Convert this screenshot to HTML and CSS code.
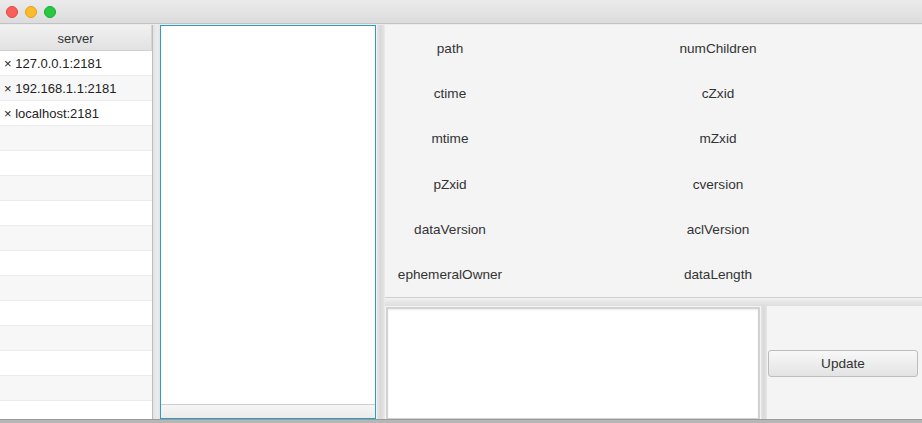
FILE: index.html
```html
<!DOCTYPE html>
<html>
<head>
<meta charset="utf-8">
<link rel="stylesheet" href="styles.css">
</head>
<body>
<div class="window">
  <div class="titlebar">
    <span class="light red"></span>
    <span class="light yellow"></span>
    <span class="light green"></span>
  </div>
  <div class="main">
    <div class="servers">
      <div class="th">server</div>
      <div class="row">× 127.0.0.1:2181</div>
      <div class="row alt">× 192.168.1.1:2181</div>
      <div class="row">× localhost:2181</div>
      <div class="row alt"></div>
      <div class="row"></div>
      <div class="row alt"></div>
      <div class="row"></div>
      <div class="row alt"></div>
      <div class="row"></div>
      <div class="row alt"></div>
      <div class="row"></div>
      <div class="row alt"></div>
      <div class="row"></div>
      <div class="row alt"></div>
      <div class="row"></div>
    </div>
    <div class="vdiv"></div>
    <div class="tree">
      <div class="tree-body"></div>
      <div class="hscroll"></div>
    </div>
    <div class="vdiv vdiv2"></div>
    <div class="detail">
      <div class="props">
        <div class="lbl">path</div><div class="lbl">numChildren</div>
        <div class="lbl">ctime</div><div class="lbl">cZxid</div>
        <div class="lbl">mtime</div><div class="lbl">mZxid</div>
        <div class="lbl">pZxid</div><div class="lbl">cversion</div>
        <div class="lbl">dataVersion</div><div class="lbl">aclVersion</div>
        <div class="lbl">ephemeralOwner</div><div class="lbl">dataLength</div>
      </div>
      <div class="hdiv"></div>
      <div class="editor">
        <div class="textarea"></div>
        <div class="vdiv3"></div>
        <div class="actions">
          <button class="btn">Update</button>
        </div>
      </div>
    </div>
  </div>
  <div class="footer"></div>
</div>
</body>
</html>
```

FILE: styles.css
```css
html, body {
  margin: 0;
  padding: 0;
}
body {
  width: 922px;
  height: 423px;
  overflow: hidden;
  font-family: "Liberation Sans", Arial, sans-serif;
  font-size: 13px;
  color: #333;
  background: #ececec;
}
.window {
  display: flex;
  flex-direction: column;
  height: 423px;
}
.titlebar {
  height: 23px;
  flex: none;
  display: flex;
  align-items: center;
  gap: 7px;
  padding-left: 6px;
  background: linear-gradient(#ebebeb, #dcdcdc);
  border-bottom: 1px solid #c2c2c2;
  box-sizing: content-box;
}
.light {
  width: 12px;
  height: 12px;
  border-radius: 50%;
  box-sizing: border-box;
}
.red { background: #fc5f57; border: 1px solid #e2463f; }
.yellow { background: #fdbc2e; border: 1px solid #e1a116; }
.green { background: #28c840; border: 1px solid #14ae2c; }

.main {
  flex: none;
  height: 394px;
  padding-top: 1px;
  display: flex;
  background: #ececec;
}
.servers {
  width: 152px;
  flex: none;
  background: #fff;
  overflow: hidden;
}
.th {
  height: 25px;
  border-bottom: 1px solid #d0d0d0;
  background: linear-gradient(#f1f1f1, #e2e2e2);
  text-align: center;
  line-height: 27px;
  color: #333;
  border-right: 1px solid #d6d6d6;
}
.row {
  height: 24px;
  border-bottom: 1px solid #ececec;
  line-height: 25px;
  padding-left: 4px;
  background: #fff;
  color: #222;
}
.row.alt {
  background: #f7f7f7;
}
.vdiv {
  width: 7px;
  flex: none;
  border-left: 1px solid #bdbdbd;
  background: linear-gradient(to right, #e2e2e2, #ececec 60%, #e4e4e4);
}
.vdiv2 {
  width: 8px;
  border-left: 1px solid #f2f2f2;
  background: linear-gradient(to right, #e6e6e6, #d8d8d8 40%, #e4e4e4 90%, #f1f1f1);
}
.tree {
  width: 214px;
  flex: none;
  height: 392px;
  border: 1px solid #2b9dc3;
  background: #fff;
  display: flex;
  flex-direction: column;
}
.tree-body {
  flex: 1;
}
.hscroll {
  height: 13px;
  border-top: 1px solid #cfcfcf;
  background: linear-gradient(#f6f6f6, #ebebeb);
}
.detail {
  flex: 1;
  display: flex;
  flex-direction: column;
  background: #f4f4f4;
}
.props {
  height: 272px;
  flex: none;
  display: grid;
  grid-template-columns: 130px 1fr;
  grid-template-rows: repeat(6, 1fr);
  align-items: center;
  justify-items: center;
  border-bottom: 1px solid #cfcfcf;
  padding-right: 1px;
}
.lbl {
  color: #333;
  font-size: 13.6px;
  padding-top: 1px;
}
.hdiv {
  height: 8px;
  flex: none;
  background: linear-gradient(#f2f2f2, #e6e6e6 50%, #dedede);
}
.editor {
  flex: 1;
  display: flex;
}
.textarea {
  width: 370px;
  flex: none;
  margin: 1px 0 0 1px;
  border: 2px solid #d2d2d2;
  border-bottom-width: 1px;
  background: #fff;
  box-shadow: inset 0 1px 2px rgba(0,0,0,0.08);
}
.vdiv3 {
  width: 6px;
  flex: none;
  border-left: 1px solid #f6f6f6;
  background: linear-gradient(to right, #e2e2e2, #d9d9d9 50%, #e6e6e6);
}
.actions {
  flex: 1;
  display: flex;
  align-items: center;
  padding: 0 3px 0 1px;
}
.btn {
  width: 150px;
  height: 27px;
  margin-top: 1px;
  font-family: "Liberation Sans", Arial, sans-serif;
  font-size: 13.6px;
  color: #333;
  border: 1px solid #bcbcbc;
  border-radius: 3px;
  background: linear-gradient(#f8f8f8, #e3e3e3);
  padding: 0;
}
.footer {
  flex: 1;
  border-top: 1px solid #9b9b9b;
  background: #b6b6b6;
}
```
